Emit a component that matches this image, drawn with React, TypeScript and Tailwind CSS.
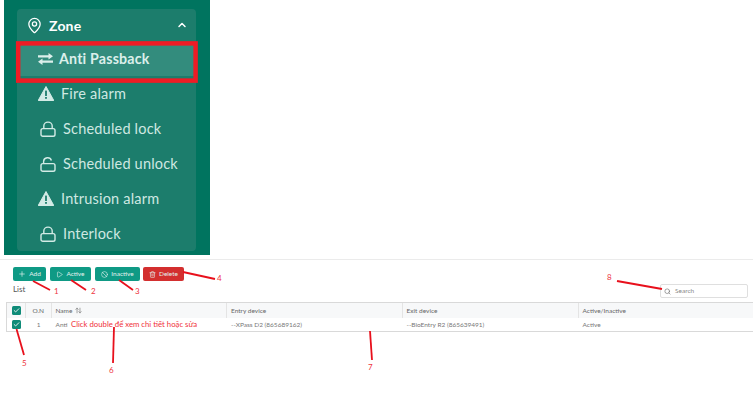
import { MapPin, ChevronUp, Plus, Play, Ban, Trash2, Search, Check, ArrowUpDown } from "lucide-react";

const font = { fontFamily: '"Lato", "Noto Sans", sans-serif' };

function MenuItem({ icon, label, gap }: { icon: React.ReactNode; label: string; gap: string }) {
  return (
    <div className={`h-[35px] flex items-center pl-[21px] ${gap} text-[14.5px] text-[#cfe8e2] tracking-[0.2px]`}>
      {icon}
      <span>{label}</span>
    </div>
  );
}

function Alert() {
  return (
    <svg width="16" height="15" viewBox="0 0 16 15" className="shrink-0">
      <path d="M8 .5 15.8 14.5H.2Z" fill="#d3ebe6" stroke="#d3ebe6" strokeLinejoin="round" />
      <rect x="7.1" y="4.6" width="1.8" height="5.4" fill="#1c7d6c" />
      <rect x="7.1" y="11" width="1.8" height="1.8" fill="#1c7d6c" />
    </svg>
  );
}

function Lock({ open }: { open?: boolean }) {
  return (
    <svg width="16" height="16" viewBox="0 0 16 16" fill="none" stroke="#d3ebe6" strokeWidth="1.4" className="shrink-0 ml-[1.5px]">
      <rect x="1" y="7.6" width="14" height="7.6" rx="1.8" />
      {open ? <path d="M3.6 7.6V5.4a4 3.8 0 0 1 7.8-1" /> : <path d="M3.8 7.6V5a4.2 3.9 0 0 1 8.4 0v2.6" />}
    </svg>
  );
}

function Swap() {
  return (
    <svg width="15" height="12" viewBox="0 0 15 12" fill="#dcefeb" className="shrink-0">
      <path d="M0 2.2h10.5V0L15 3.2 10.5 6.4V4.4H0Z" />
      <path d="M15 7.6H4.5V5.6L0 8.8 4.5 12V9.8H15Z" />
    </svg>
  );
}

function Btn({ color, icon, label }: { color: string; icon: React.ReactNode; label: string }) {
  return (
    <div className={`h-[14px] flex items-center justify-center gap-[3px] rounded-[2px] text-[6.5px] text-[#e4f3f0] ${color}`}>
      {icon}
      <span>{label}</span>
    </div>
  );
}

function Box() {
  return (
    <div className="w-[9px] h-[9px] rounded-[1.5px] bg-[#0f8b78] flex items-center justify-center">
      <Check size={7} color="white" strokeWidth={3} />
    </div>
  );
}

const cols = "grid grid-cols-[19px_25.5px_175.5px_175.5px_176px_1fr]";

export default function App() {
  return (
    <div className="w-[753px] h-[417px] bg-white relative overflow-hidden" style={font}>
      <div className="ml-1 w-[206px] h-[255px] bg-[#00745f] pt-[9px] pl-[13px]">
        <div className="w-[179px] h-[242px] bg-[#1c7d6c] rounded-[4px]">
          <div className="h-[32px] flex items-center pl-[9px] pr-[8px] text-white text-[14px] font-bold tracking-[0.2px]">
            <MapPin size={17} strokeWidth={1.8} />
            <span className="ml-[6px] flex-1">Zone</span>
            <ChevronUp size={12} strokeWidth={3} />
          </div>
          <div className="h-[34px] mt-px bg-[#338c7d] flex items-center pl-[22px] gap-[6px] -ml-px w-[180px] text-[#dcefeb] text-[14.2px] font-bold tracking-[0.2px]">
            <Swap />
            <span>Anti Passback</span>
          </div>
          <MenuItem icon={<Alert />} label="Fire alarm" gap="gap-[7px]" />
          <MenuItem icon={<Lock />} label="Scheduled lock" gap="gap-[7.5px]" />
          <MenuItem icon={<Lock open />} label="Scheduled unlock" gap="gap-[7.5px]" />
          <MenuItem icon={<Alert />} label="Intrusion alarm" gap="gap-[7px]" />
          <MenuItem icon={<Lock />} label="Interlock" gap="gap-[7.5px]" />
        </div>
      </div>

      <div className="mt-1 border-t border-[#ebebeb] pt-[7px] pl-[13px]">
        <div className="flex gap-[4px]">
          <div className="w-[33px]"><Btn color="bg-[#0f9a85]" icon={<Plus size={8} />} label="Add" /></div>
          <div className="w-[41px]"><Btn color="bg-[#0f9a85]" icon={<Play size={7} />} label="Active" /></div>
          <div className="w-[45px]"><Btn color="bg-[#0f9a85]" icon={<Ban size={7} />} label="Inactive" /></div>
          <div className="w-[41px] ml-[-1px]"><Btn color="bg-[#d32f2f]" icon={<Trash2 size={7} />} label="Delete" /></div>
        </div>
        <div className="flex items-start justify-between pr-[5px] mt-[2px]">
          <span className="text-[8px] text-[#555] leading-[12px]">List</span>
          <div className="w-[88px] h-[14px] mt-px border border-[#dfdfdf] rounded-[2px] flex items-center pl-[3px] gap-[4px] text-[6.5px] text-[#888]">
            <Search size={7} color="#666" />
            <span>Search</span>
          </div>
        </div>
      </div>

      <div className="ml-[6px] mt-[4px] border-y border-l border-[#d9d9d9] text-[6.5px] text-[#666]">
        <div className={`${cols} h-[15px] bg-[#f7f8f9] items-center`}>
          <div className="flex justify-center border-r border-[#e4e4e4] h-full items-center"><Box /></div>
          <div className="text-center border-r border-[#e4e4e4] h-full flex items-center justify-center">O.N</div>
          <div className="pl-[4px] border-r border-[#e4e4e4] h-full flex items-center gap-[3px]">Name <ArrowUpDown size={7} /></div>
          <div className="pl-[4px] border-r border-[#e4e4e4] h-full flex items-center">Entry device</div>
          <div className="pl-[4px] border-r border-[#e4e4e4] h-full flex items-center">Exit device</div>
          <div className="pl-[4px] h-full flex items-center">Active/Inactive</div>
        </div>
        <div className={`${cols} h-[13px] items-center text-[#777]`}>
          <div className="flex justify-center"><Box /></div>
          <div className="text-center">1</div>
          <div className="pl-[4px]">Anti</div>
          <div className="pl-[4px]">--XPass D2 (865689162)</div>
          <div className="pl-[4px]">--BioEntry R2 (865639491)</div>
          <div className="pl-[4px]">Active</div>
        </div>
      </div>

      <span className="absolute left-[71px] top-[318px] text-[7.75px] leading-[12px] text-[#f0303a]">Click double để xem chi tiết hoặc sửa</span>

      <svg className="absolute left-0 top-0 pointer-events-none" width="753" height="417" fill="none" stroke="#ee1c25">
        <rect x="18.2" y="43.4" width="177.4" height="37.2" strokeWidth="4.5" />
        <g strokeWidth="1.8" stroke="#e8101c">
          <path d="M33 281 50 290" />
          <path d="M71 280 86 290" />
          <path d="M119 280 133 290" />
          <path d="M183 272 215 279" />
          <path d="M16.5 329 24 355" />
          <path d="M114 327 113 363" />
          <path d="M370 331 372 360" />
          <path d="M617 281 662 289" />
        </g>
      </svg>
      {[
        ["1", "left-[54px] top-[286px]"],
        ["2", "left-[91px] top-[286px]"],
        ["3", "left-[135px] top-[286px]"],
        ["4", "left-[217px] top-[273px]"],
        ["5", "left-[22px] top-[358px]"],
        ["6", "left-[109px] top-[365px]"],
        ["7", "left-[368px] top-[362px]"],
        ["8", "left-[607px] top-[272px]"],
      ].map(([n, pos]) => (
        <span key={n} className={`absolute ${pos} text-[8px] leading-[10px] text-[#ee3340]`}>{n}</span>
      ))}
    </div>
  );
}
